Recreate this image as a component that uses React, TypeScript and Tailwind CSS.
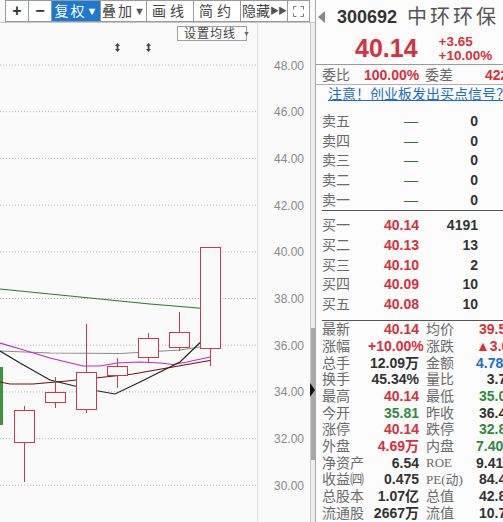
import React from 'react'

const RED = '#d8303c'
const GREEN = '#2f8a3a'
const DARK = '#333333'

// price -> y (page coordinates)
const py = (p: number) => 65 + (48 - p) * 23.35

const candles = [
  { x: 14, top: 410, bot: 442, hi: 406, lo: 482 },
  { x: 45, top: 392, bot: 402, hi: 377, lo: 408 },
  { x: 76, top: 372, bot: 409, hi: 324, lo: 413 },
  { x: 107, top: 366, bot: 375, hi: 358, lo: 388 },
  { x: 138, top: 338, bot: 357, hi: 333, lo: 363 },
  { x: 169, top: 332, bot: 347, hi: 312, lo: 351 },
  { x: 200, top: 247, bot: 348, hi: 247, lo: 366 },
]

const maLines = [
  { c: '#2a7a2a', pts: '0,289 100,299 150,304 210,309' },
  { c: '#8c8c8c', pts: '0,351 50,353 120,353.5 180,350 200,347 210,346' },
  { c: '#cc22cc', pts: '0,343 17,348 50,358 83,366 100,366 117,363 140,362 160,363 173,364.5 187,362 210,357' },
  { c: '#7a0c0c', pts: '0,382 10,384 33,384 67,381 100,377.5 133,374 167,368 210,360.5' },
  { c: '#222222', pts: '0,351 20,363 50,380 87,389 115,394 140,382 180,362 210,333' },
]

function Chart() {
  const levels = [48, 46, 44, 42, 40, 38, 36, 34, 32, 30]
  return (
    <svg width="310" height="499" viewBox="0 23 310 499" className="block">
      <line x1="257.5" y1="23" x2="257.5" y2="522" stroke="#dcdcdc" />
      {levels.map((l) => (
        <g key={l}>
          <line x1="0" y1={py(l)} x2="257" y2={py(l)} stroke="#b8b8b8" strokeDasharray="1 2" />
          <text x="304" y={py(l) + 4.5} textAnchor="end" fontSize="12" fill="#8a8a8a" fontFamily="Liberation Sans, sans-serif">
            {l.toFixed(2)}
          </text>
        </g>
      ))}
      {/* partial green candle at the left edge */}
      <rect x="-2" y="367" width="5" height="58" fill="#3d963d" />
      {maLines.map((m, i) => (
        <polyline key={i} points={m.pts} fill="none" stroke={m.c} strokeWidth="1.2" />
      ))}
      {candles.map((c, i) => {
        const cx = c.x + 10.5
        return (
          <g key={i} stroke="#cc3a48" strokeWidth="1">
            <line x1={cx} y1={c.hi} x2={cx} y2={c.top} />
            <line x1={cx} y1={c.bot} x2={cx} y2={c.lo} />
            <rect x={c.x + 0.5} y={c.top + 0.5} width="20" height={c.bot - c.top} fill="#fafafa" />
          </g>
        )
      })}
      {[117.5, 148.5].map((x) => (
        <path key={x} d={`M${x} 43 l-2.5 3 h1.6 v3 h-1.6 l2.5 3 l2.5 -3 h-1.6 v-3 h1.6 z`} fill="#444" />
      ))}
    </svg>
  )
}

function ToolBtn({ children, w, active }: { children: React.ReactNode; w: string; active?: boolean }) {
  return (
    <div
      className={`${w} flex h-full items-center justify-center whitespace-nowrap border-r border-[#9a9a9a] text-[14px] ${
        active ? 'bg-[#1d78d2] text-white' : 'bg-white text-[#444]'
      }`}
    >
      {children}
    </div>
  )
}

function Toolbar() {
  return (
    <div className="flex h-[23px] pl-[5px]">
      <div className="flex h-full border-y border-l border-[#9a9a9a]">
        <ToolBtn w="w-[23px]">
          <span className="text-[16px] font-bold text-[#333]">+</span>
        </ToolBtn>
        <ToolBtn w="w-[23px]">
          <span className="text-[16px] font-bold text-[#333]">−</span>
        </ToolBtn>
        <ToolBtn w="w-[49px]" active>
          <span className="tracking-[2px]">复权</span>
          <span className="text-[11px]">▼</span>
        </ToolBtn>
        <ToolBtn w="w-[46px]">
          <span className="tracking-[2px]">叠加</span>
          <span className="text-[11px] text-[#555]">▼</span>
        </ToolBtn>
        <ToolBtn w="w-[47px]">
          <span className="tracking-[4px]">画线</span>
        </ToolBtn>
        <ToolBtn w="w-[47px]">
          <span className="tracking-[4px]">简约</span>
        </ToolBtn>
        <ToolBtn w="w-[47px]">
          <span>隐藏</span>
          <span className="text-[9px] tracking-[-1px] text-[#555]">▶▶</span>
        </ToolBtn>
        <ToolBtn w="w-[22px]">
          <svg width="11" height="11" viewBox="0 0 11 11" fill="none" stroke="#777" strokeWidth="1">
            <path d="M0.5 3.5v-3h3M7.5 0.5h3v3M10.5 7.5v3h-3M3.5 10.5h-3v-3" />
          </svg>
        </ToolBtn>
      </div>
    </div>
  )
}

function BookRow({ label, price, qty }: { label: string; price?: string; qty: string }) {
  return (
    <div className="flex h-[19.7px] items-center">
      <span className="w-[46px] shrink-0 text-[14px] text-[#6a6a6a]">{label}</span>
      {price ? (
        <span className="w-[51px] shrink-0 text-right text-[14px] font-bold" style={{ color: RED }}>
          {price}
        </span>
      ) : (
        <span className="w-[51px] shrink-0 pr-[1px] text-right text-[14px] text-[#2f6f35]">—</span>
      )}
      <span className="w-[59px] shrink-0 text-right text-[14px] font-bold text-[#333]">{qty}</span>
    </div>
  )
}

type Stat = [string, string, string, string, string, string]

const stats: Stat[] = [
  ['最新', '40.14', RED, '均价', '39.51', RED],
  ['涨幅', '+10.00%', RED, '涨跌', '▲3.65', RED],
  ['总手', '12.09万', DARK, '金额', '4.78亿', '#1a6fc4'],
  ['换手', '45.34%', DARK, '量比', '3.75', DARK],
  ['最高', '40.14', RED, '最低', '35.02', GREEN],
  ['今开', '35.81', GREEN, '昨收', '36.49', DARK],
  ['涨停', '40.14', RED, '跌停', '32.84', GREEN],
  ['外盘', '4.69万', RED, '内盘', '7.40万', GREEN],
  ['净资产', '6.54', DARK, 'ROE', '9.41%', DARK],
  ['收益㈣', '0.475', DARK, 'PE(动)', '84.48', DARK],
  ['总股本', '1.07亿', DARK, '总值', '42.89', DARK],
  ['流通股', '2667万', DARK, '流值', '10.70', DARK],
]

function StatRow({ s }: { s: Stat }) {
  const serif = s[3] === 'ROE' || s[3].startsWith('PE')
  return (
    <div className="flex h-[16.7px] items-center whitespace-nowrap">
      <span className="w-[46px] shrink-0 text-[14px] text-[#6a6a6a]">{s[0]}</span>
      <span className="w-[51px] shrink-0 text-right text-[14px] font-bold" style={{ color: s[2] }}>
        {s[1]}
      </span>
      <span
        className={`ml-[7px] w-[50px] shrink-0 text-[#6a6a6a] ${
          serif ? "font-['Liberation_Serif','Noto_Sans_CJK_SC',serif] text-[13px]" : 'text-[14px]'
        }`}
      >
        {s[3]}
      </span>
      <span className="w-[38px] shrink-0 text-right text-[14px] font-bold" style={{ color: s[5] }}>
        {s[4]}
      </span>
    </div>
  )
}

function Panel() {
  return (
    <div className="flex h-full w-[188px] shrink-0 flex-col overflow-hidden border-l border-[#a8a8a8] bg-[#fcfcfc]">
      <div className="flex h-[33px] shrink-0 items-center whitespace-nowrap pl-[2px]">
        <svg width="7" height="12" viewBox="0 0 7 12" className="mr-[12px] shrink-0">
          <path d="M7 0v12L0 6z" fill="#888" />
        </svg>
        <span className="shrink-0 text-[18px] font-bold text-[#333]">300692</span>
        <span className="ml-[10px] shrink-0 text-[20px] tracking-[3px] text-[#555]">中环环保</span>
      </div>
      <div className="flex h-[32px] shrink-0 items-center whitespace-nowrap border-b border-[#9a9a9a] pl-[39px]">
        <span className="text-[25px] font-bold" style={{ color: RED }}>
          40.14
        </span>
        <div className="ml-[21px] flex flex-col text-[13.5px] font-bold leading-[14px]" style={{ color: RED }}>
          <span>+3.65</span>
          <span>+10.00%</span>
        </div>
      </div>
      <div className="flex h-[20px] shrink-0 items-center whitespace-nowrap border-b border-[#b0b0b0] pl-[6px]">
        <span className="w-[42px] shrink-0 text-[14px] text-[#6a6a6a]">委比</span>
        <span className="w-[55px] shrink-0 text-right text-[14px] font-bold" style={{ color: RED }}>
          100.00%
        </span>
        <span className="ml-[6px] w-[60px] shrink-0 text-[14px] text-[#6a6a6a]">委差</span>
        <span className="shrink-0 text-[14px] font-bold" style={{ color: RED }}>
          422
        </span>
      </div>
      <div className="h-[18px] shrink-0 whitespace-nowrap pl-[12px] pt-[1px] text-[14px] leading-[16px] text-[#1a6fc4] underline">
        注意！创业板发出买点信号？
      </div>
      <div className="shrink-0 pl-[6px] pt-[8px]">
        <BookRow label="卖五" qty="0" />
        <BookRow label="卖四" qty="0" />
        <BookRow label="卖三" qty="0" />
        <BookRow label="卖二" qty="0" />
        <BookRow label="卖一" qty="0" />
      </div>
      <div className="ml-[6px] mt-[1px] shrink-0 border-t border-[#555]" />
      <div className="shrink-0 pl-[6px] pt-[4px]">
        <BookRow label="买一" price="40.14" qty="4191" />
        <BookRow label="买二" price="40.13" qty="13" />
        <BookRow label="买三" price="40.10" qty="2" />
        <BookRow label="买四" price="40.09" qty="10" />
        <BookRow label="买五" price="40.08" qty="10" />
      </div>
      <div className="ml-[6px] mt-[6px] shrink-0 border-t border-[#555]" />
      <div className="shrink-0 pl-[6px]">
        {stats.map((s) => (
          <StatRow key={s[0]} s={s} />
        ))}
      </div>
    </div>
  )
}

export default function App() {
  return (
    <div className="flex h-[522px] w-[503px] overflow-hidden bg-[#fafafa] font-['Liberation_Sans','Noto_Sans_CJK_SC',sans-serif] leading-none">
      <div className="flex w-[315px] shrink-0 flex-col">
        <Toolbar />
        <div className="flex flex-1 border-t border-[#c8c8c8]">
          <div className="relative w-[310px]">
            <Chart />
            <div className="absolute left-[177px] top-[3px] flex h-[15px] w-[70px] items-center whitespace-nowrap border border-[#a0a0a0] bg-[#fcfcfc] pl-[6px] text-[12px] text-[#444]">
              <span className="tracking-[1px]">设置均线</span>
              <span className="ml-[7px] text-[7px] text-[#666]">▼</span>
            </div>
          </div>
          <div className="relative w-[5px] border-l border-[#c8c8c8] bg-[#eeeeee]">
            <div className="absolute left-0 top-[305px] h-[132px] w-[4px] bg-[#a9a9a9]" />
            <svg width="5" height="14" viewBox="0 0 5 14" className="absolute left-[-1px] top-[360px]">
              <path d="M0 0l5 7l-5 7z" fill="#111" />
            </svg>
          </div>
        </div>
      </div>
      <Panel />
    </div>
  )
}
